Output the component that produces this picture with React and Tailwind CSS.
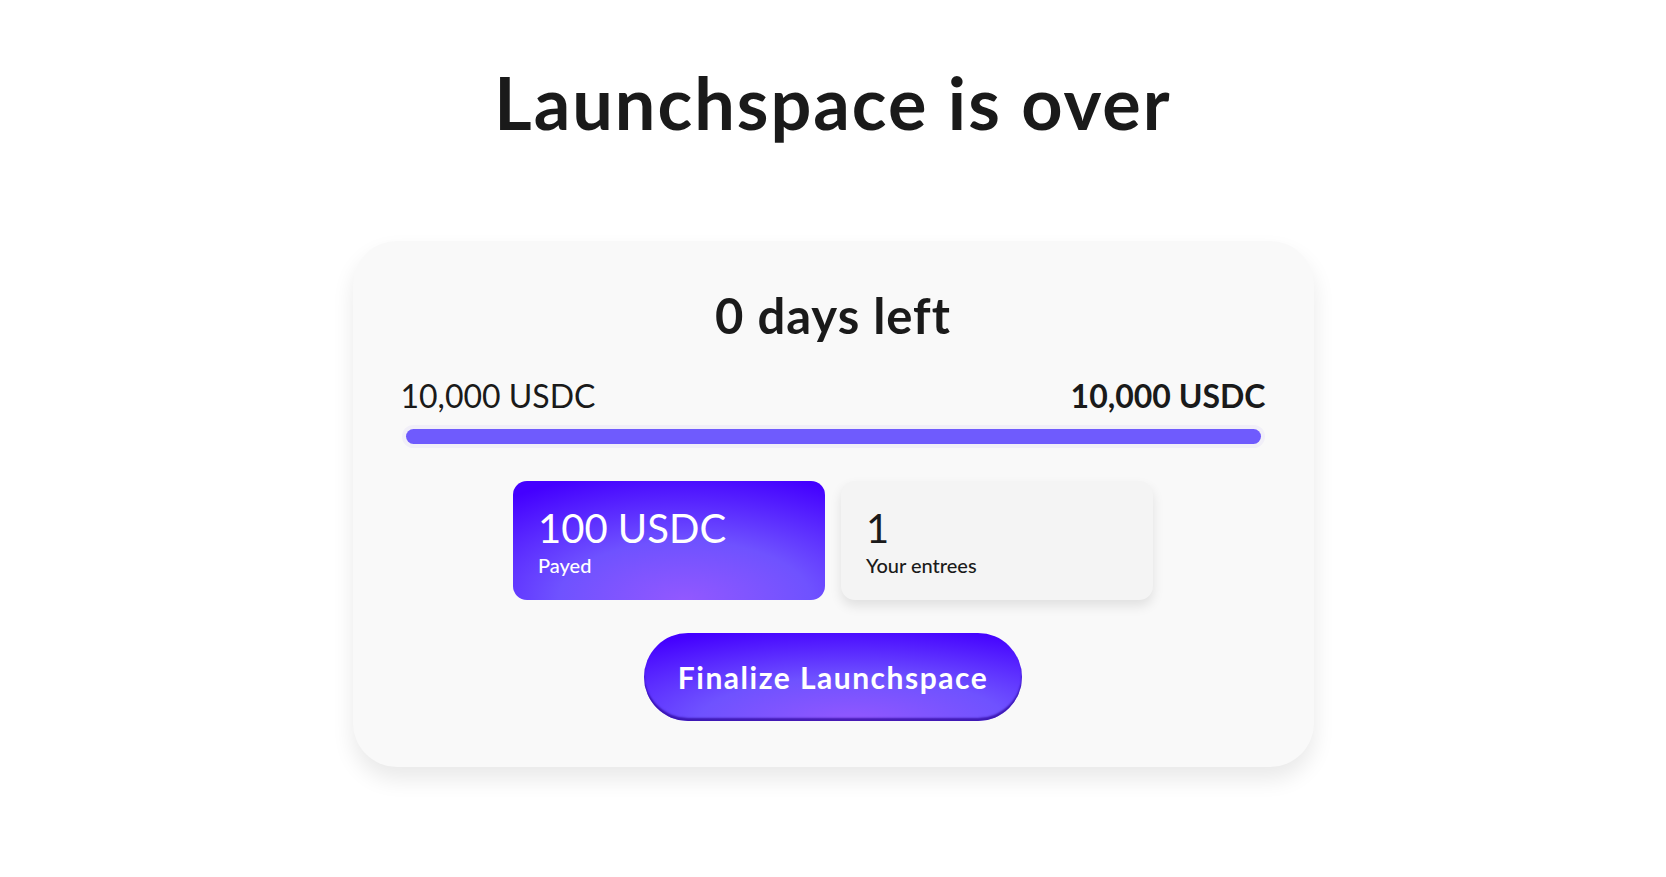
import React from 'react';

const purple = 'bg-[radial-gradient(ellipse_90%_110%_at_55%_100%,#9258ff_0%,#6f52ff_45%,#4400ff_100%)]';

function Stat({ value, label, highlight }) {
    return (
        <div
            className={
                highlight
                    ? `w-[312px] h-[119px] rounded-[14px] px-[25px] pt-[27px] text-white ${purple}`
                    : 'w-[312px] h-[119px] rounded-[14px] px-[25px] pt-[27px] text-[#1a1a1a] bg-[#f4f4f4] shadow-[0_6px_12px_rgba(0,0,0,0.1)]'
            }
        >
            <div className="text-[40px] leading-none">{value}</div>
            <div className="text-[20px] leading-none mt-[7px] font-medium">{label}</div>
        </div>
    );
}

export default function App() {
    return (
        <div className="min-h-screen bg-white pt-[66px] pb-10 text-[#1a1a1a] font-['Lato',sans-serif]">
            {/* Heading */}
            <h1 className="text-center font-bold text-[72px] leading-none tracking-[2px]">Launchspace is over</h1>

            {/* Card */}
            <div className="mx-auto mt-[103px] w-[961px] rounded-[44px] bg-[#f9f9f9] px-12 pt-[50px] pb-[46px] shadow-[0_12px_22px_rgba(0,0,0,0.09)]">
                <h2 className="text-center font-bold text-[49px] leading-none tracking-[1px]">0 days left</h2>

                <div className="mt-[40px] flex justify-between text-[32px] leading-none">
                    <span>10,000 USDC</span>
                    <span className="font-bold">10,000 USDC</span>
                </div>

                <div className="mt-[13px] mx-px rounded-full bg-[#f1eff8] p-[4px]">
                    <div className="h-[15px] rounded-full bg-[#6f5bfd]" />
                </div>

                <div className="mt-[33px] flex justify-center gap-4">
                    <Stat value="100 USDC" label="Payed" highlight />
                    <Stat value="1" label="Your entrees" />
                </div>

                <div className="mt-[33px] flex justify-center">
                    <button
                        className={`h-[88px] w-[378px] rounded-full text-white font-bold text-[30px] tracking-[1.5px] shadow-[inset_0_-3px_2px_rgba(40,0,150,0.7)] ${purple}`}
                    >
                        Finalize Launchspace
                    </button>
                </div>
            </div>
        </div>
    );
}
